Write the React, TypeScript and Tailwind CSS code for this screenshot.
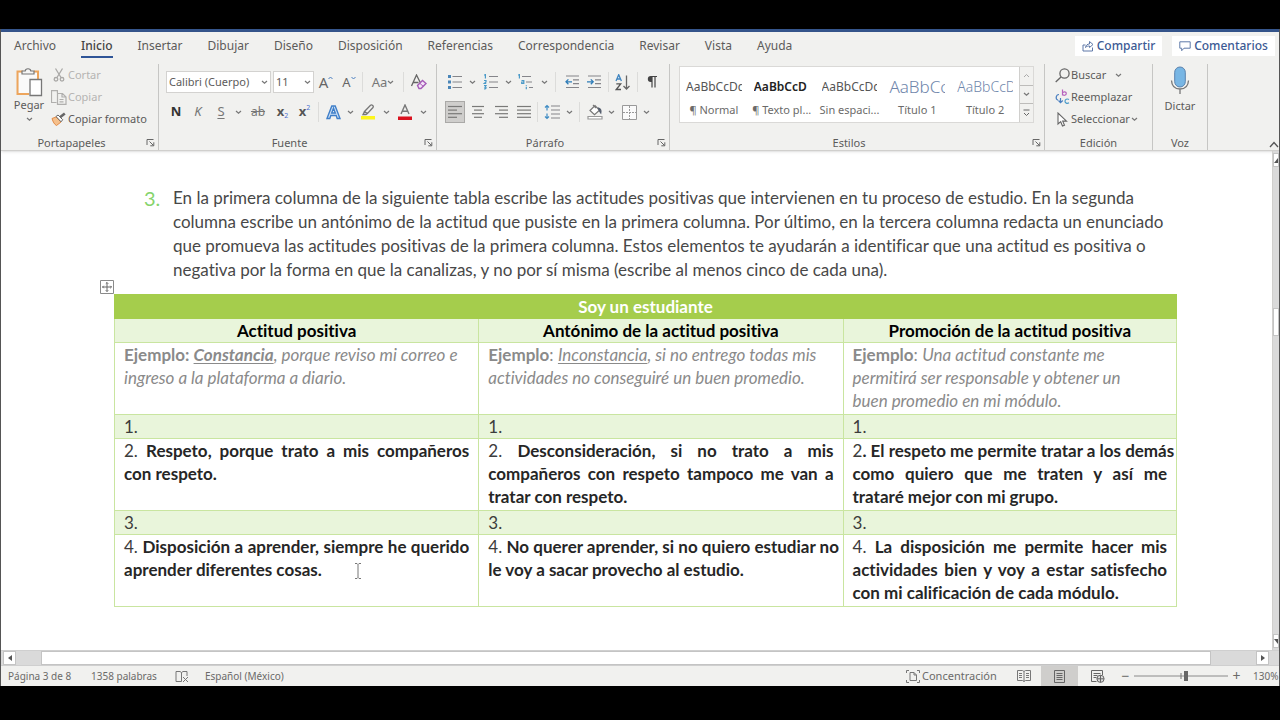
import type { ReactNode } from "react";

const TABS = [
  "Archivo",
  "Inicio",
  "Insertar",
  "Dibujar",
  "Diseño",
  "Disposición",
  "Referencias",
  "Correspondencia",
  "Revisar",
  "Vista",
  "Ayuda",
];

function Chevron() {
  return (
    <svg width="7" height="5" viewBox="0 0 7 5" fill="none" stroke="#777" strokeWidth="1.2">
      <path d="M1 1l2.5 2.3L6 1" />
    </svg>
  );
}

function Tool({ label, w, children }: { label: string; w: string; children: ReactNode }) {
  return (
    <button type="button" aria-label={label} className={`flex h-[22px] shrink-0 items-center justify-center ${w}`}>
      {children}
    </button>
  );
}

function More({ label, w = "w-[10px]" }: { label: string; w?: string }) {
  return (
    <Tool label={label} w={w}>
      <Chevron />
    </Tool>
  );
}

function Sep({ w = "w-[5px]" }: { w?: string }) {
  return (
    <span className={`flex h-5 shrink-0 justify-center ${w}`}>
      <span className="w-px bg-[#dcdcda]" />
    </span>
  );
}

function Group({
  title,
  w,
  launcher = false,
  children,
}: {
  title: string;
  w: string;
  launcher?: boolean;
  children: ReactNode;
}) {
  return (
    <section
      aria-label={title}
      className={`mt-1 flex shrink-0 flex-col border-r border-[#c6c6c4] ${w}`}
    >
      <div className="flex-1">{children}</div>
      <div className="flex h-[15px] items-center">
        <span className={`flex-1 text-center text-[11px] leading-[15px] text-[#5c5b5a] ${launcher ? "pr-1" : ""}`}>{title}</span>
        {launcher && (
          <button type="button" aria-label={`Opciones de ${title}`} className="block w-3">
            <svg width="9" height="9" viewBox="0 0 9 9" fill="none" stroke="#666" strokeWidth="1">
              <path d="M1 7V1.5h6.5M3.5 3.5l4 4M7.8 4.3v3.5H4.3" />
            </svg>
          </button>
        )}
      </div>
    </section>
  );
}

function Lines({ rows }: { rows: [number, number][] }) {
  return (
    <svg width="14" height="14" viewBox="0 0 14 14" stroke="#7a7a78" strokeWidth="1.2">
      {rows.map(([a, b], i) => (
        <path key={i} d={`M${a} ${1.5 + i * 3.6}H${b}`} />
      ))}
    </svg>
  );
}

function BulletIcon() {
  return (
    <svg width="16" height="16" viewBox="0 0 16 16" fill="none">
      <path d="M5.5 2.5H15M5.5 8H15M5.5 13.5H15" stroke="#85858a" strokeWidth="1.2" />
      <path d="M1 1h3v3H1zM1 6.500h3v3H1zM1 12h3v3H1z" fill="#4a86b8" />
    </svg>
  );
}

function NumberIcon() {
  return (
    <svg width="16" height="16" viewBox="0 0 16 16" fill="none">
      <path d="M6 2.5h9M6 8h9M6 13.5h9" stroke="#85858a" strokeWidth="1.2" />
      <path d="M1.2 1.2l1.2-.7v4M1 6.5h2v1.4L1.2 9.5h2M1 11.5h2l-1 1.6c1.8 0 1.3 2-.9 1.7" stroke="#4a9ac8" strokeWidth="1.2" />
    </svg>
  );
}

function MultiIcon() {
  return (
    <svg width="18" height="16" viewBox="0 0 18 16" fill="none">
      <path d="M5 2.5h9M9 8h6M12 13.5h4" stroke="#85858a" strokeWidth="1.2" />
      <path d="M1.2 1.2l1.2-.7v4M4.5 6.5h2.3v3H4.7V8h2M9.3 11.2v.8M9.3 12.8v2.4" stroke="#4a9ac8" strokeWidth="1.2" />
    </svg>
  );
}

function IndentIcon({ out = false }: { out?: boolean }) {
  return (
    <svg width="15" height="14" viewBox="0 0 15 14" fill="none">
      <path d="M1 1h13M8 4.8h6M8 8.7h6M1 12.5h13" stroke="#85858a" strokeWidth="1.2" />
      <path
        d={out ? "M7 6.8H1M3.4 4.4L1 6.8l2.4 2.4" : "M0 6.8h6M3.8 4.4l2.4 2.4-2.4 2.4"}
        stroke="#2f7db8"
        strokeWidth="1.3"
      />
    </svg>
  );
}

function SmallTool({ label, muted = false, icon, children }: { label: string; muted?: boolean; icon: ReactNode; children?: ReactNode }) {
  return (
    <button
      type="button"
      className={`flex h-[22px] items-center gap-px text-[11px] ${muted ? "text-[#b5b4b2]" : "text-[#5c5b5a]"}`}
    >
      <span className="flex w-4 justify-center">{icon}</span>
      {label}
      {children}
    </button>
  );
}

function Picker({ label, value, w }: { label: string; value: string; w: string }) {
  return (
    <span className={`grid h-[22px] items-center border border-[#d3d2d0] bg-white ${w}`}>
      <select
        aria-label={label}
        defaultValue={value}
        className="col-start-1 row-start-1 w-full appearance-none bg-transparent pl-0.5 text-[11px] text-[#5c5b5a]"
      >
        <option>{value}</option>
      </select>
      <span className="pointer-events-none col-start-1 row-start-1 justify-self-end pr-0.5">
        <Chevron />
      </span>
    </span>
  );
}

function StyleCard({ sample, name, tone }: { sample: string; name: string; tone: string }) {
  return (
    <button type="button" className="flex min-w-0 flex-1 flex-col items-center px-1.5 pt-2">
      <span className={`h-6 w-full overflow-hidden text-left leading-6 whitespace-nowrap ${tone}`}>{sample}</span>
      <span className="text-[11px] leading-[22px] whitespace-nowrap text-[#6b6a69]">{name}</span>
    </button>
  );
}

function Clipboard() {
  return (
    <Group title="Portapapeles" w="w-[158px]" launcher>
      <div className="flex pl-3">
        <button type="button" className="flex w-8 flex-col items-center pt-1 text-[11px] text-[#5c5b5a]">
          <svg width="28" height="29" viewBox="0 0 28 29" fill="none">
            <path d="M8 3.500H2.500V26H14M19 3.500h4V11" stroke="#eda55c" strokeWidth="2" />
            <path d="M4 5h18v6h-7v14H4z" fill="#fafafa" />
            <path d="M7 6V3h3.200c.3-3 5.300-3 5.600 0H19v3z" fill="#f6f6f6" stroke="#777" strokeWidth="1.200" />
            <path d="M15 11.500h11.500V27.500H15z" fill="#fff" stroke="#777" strokeWidth="1.300" />
          </svg>
          <span className="leading-4">Pegar</span>
          <span className="pt-1">
            <Chevron />
          </span>
        </button>
        <div className="pl-1.5">
          <SmallTool
            label="Cortar"
            muted
            icon={
              <svg width="12" height="14" viewBox="0 0 12 14" fill="none" stroke="#aaa9a7" strokeWidth="1.300">
                <path d="M2.500 0.500l5.500 9M9.500 0.500L4 9.500" />
                <circle cx="3" cy="11.300" r="1.800" />
                <circle cx="9" cy="11.300" r="1.800" />
              </svg>
            }
          />
          <SmallTool
            label="Copiar"
            muted
            icon={
              <svg width="16" height="15" viewBox="0 0 16 15" fill="none" stroke="#b0afad" strokeWidth="1.200">
                <path d="M5.500 12.500h-5V.6h5.900V3M6.500 3.500h5l3.500 3.500v7.300H6.500zM11 3.500V7h4M8.500 9.500h4M8.500 11.800h4" />
              </svg>
            }
          />
          <SmallTool
            label="Copiar formato"
            icon={
              <svg width="16" height="14" viewBox="0 0 16 14" fill="none">
                <path d="M1 6.500l4-1.500 5 5-4.500 3.500c-2-1-3.500-3.500-4.500-7z" fill="#f5c08c" stroke="#e28a45" />
                <path d="M5 4.500l2-1.500 4.700 4.700-1.600 2.100z" fill="#fff" stroke="#666" />
                <path d="M9 5.300L13.800 1.500" stroke="#666" strokeWidth="2.600" />
              </svg>
            }
          />
        </div>
      </div>
    </Group>
  );
}

function FontGroup() {
  return (
    <Group title="Fuente" w="w-[278px]" launcher>
      <div className="flex flex-col gap-2 pt-[7px] pl-[7px]">
        <div className="flex items-center">
          <Picker label="Fuente" value="Calibri (Cuerpo)" w="w-[105px]" />
          <span className="w-0.5" />
          <Picker label="Tamaño de fuente" value="11" w="w-[41px]" />
          <Tool label="Aumentar tamaño" w="w-6">
            <span className="text-[15px] leading-5 text-[#666]">A</span>
            <svg width="5" height="12" viewBox="0 0 5 12" fill="none" stroke="#4a7fc0"><path d="M.5 3L2.500 1l2 2" /></svg>
          </Tool>
          <Tool label="Disminuir tamaño" w="w-[22px]">
            <span className="text-[13px] leading-5 text-[#666]">A</span>
            <svg width="5" height="12" viewBox="0 0 5 12" fill="none" stroke="#4a7fc0"><path d="M.5 1l2 2 2-2" /></svg>
          </Tool>
          <Sep />
          <Tool label="Cambiar mayúsculas" w="w-9">
            <span className="text-[13px] leading-5 text-[#777]">Aa</span>
            <Chevron />
          </Tool>
          <Sep />
          <Tool label="Borrar formato" w="w-[26px]">
            <svg width="18" height="16" viewBox="0 0 18 16" fill="none">
              <path d="M1.500 12L6.500 1l4 8M3.500 8.500h5" stroke="#666" strokeWidth="1.300" />
              <path d="M7.500 11.500l5-5 3.500 3-5 5h-2z" fill="#f4e4f7" stroke="#a55bb8" strokeWidth="1.400" />
              <path d="M9.800 9.300l3.400 3" stroke="#a55bb8" />
            </svg>
          </Tool>
        </div>
        <div className="flex items-center">
          <Tool label="Negrita" w="w-5"><b className="text-[13px] text-[#333]">N</b></Tool>
          <Tool label="Cursiva" w="w-6"><i className="text-[13px] text-[#777]">K</i></Tool>
          <Tool label="Subrayado" w="w-[22px]"><u className="text-[13px] text-[#777] underline-offset-2">S</u></Tool>
          <More label="Tipos de subrayado" w="w-3" />
          <Tool label="Tachado" w="w-7"><s className="text-[12px] text-[#777]">ab</s></Tool>
          <Tool label="Subíndice" w="w-[21px]">
            <b className="text-[13px] text-[#555]">x</b><span className="pt-2 text-[7px] text-[#4a6fd0]">2</span>
          </Tool>
          <Tool label="Superíndice" w="w-[23px]">
            <b className="text-[13px] text-[#555]">x</b><span className="pb-2 text-[7px] text-[#4a6fd0]">2</span>
          </Tool>
          <Sep />
          <Tool label="Efectos de texto" w="w-6">
            <svg width="15" height="15" viewBox="0 0 15 15" fill="#cfe2f6" stroke="#3f7fc9" strokeWidth="1.400">
              <path d="M1 13.500L5.800 1h3.400L14 13.500h-2.800l-1-3H4.800l-1 3zM5.700 8h3.600L7.500 3.300z" />
            </svg>
          </Tool>
          <More label="Más efectos" />
          <Tool label="Color de resaltado" w="w-[26px]">
            <svg width="16" height="16" viewBox="0 0 16 16" fill="none">
              <path d="M4.500 7.500l6-6.300c1.500-1 3.500.8 2.500 2.300L7.500 9.500zM4.500 7.500l-1.500 3h3l1.500-1" stroke="#777" strokeWidth="1.300" />
              <path d="M1 12h14v3.500H1z" fill="#fdf51c" />
            </svg>
          </Tool>
          <More label="Más resaltados" />
          <Tool label="Color de fuente" w="w-[27px]">
            <svg width="16" height="17" viewBox="0 0 16 17" fill="none">
              <path d="M4 10L8 1l4 9M5.300 7.200h5.400" stroke="#777" strokeWidth="1.400" />
              <path d="M1 12.500h14V16H1z" fill="#d9121f" />
            </svg>
          </Tool>
          <More label="Más colores" />
        </div>
      </div>
    </Group>
  );
}

function Paragraph() {
  return (
    <Group title="Párrafo" w="w-[233px]" launcher>
      <div className="flex flex-col gap-2 pt-[7px] pl-2">
        <div className="flex items-center">
          <Tool label="Viñetas" w="w-5"><BulletIcon /></Tool>
          <More label="Más viñetas" w="w-[14px]" />
          <Tool label="Numeración" w="w-6"><NumberIcon /></Tool>
          <More label="Más numeración" />
          <Tool label="Lista multinivel" w="w-[26px]"><MultiIcon /></Tool>
          <More label="Más listas" />
          <Sep w="w-[13px]" />
          <Tool label="Disminuir sangría" w="w-5"><IndentIcon out /></Tool>
          <Tool label="Aumentar sangría" w="w-6"><IndentIcon /></Tool>
          <Sep />
          <Tool label="Ordenar" w="w-6">
            <svg width="16" height="17" viewBox="0 0 16 17" fill="none" strokeWidth="1.300">
              <path d="M1 7l2.700-6.300L6.400 7M2 5h3.500" stroke="#3f85c0" />
              <path d="M1.300 9.800h4.400L1.300 15.500h4.700" stroke="#555" />
              <path d="M11.500 1.500v13.500M8.500 12l3 3 3-3" stroke="#666" />
            </svg>
          </Tool>
          <Sep />
          <Tool label="Mostrar todo" w="w-6">
            <svg width="10" height="14" viewBox="0 0 10 14" fill="none">
              <path d="M5 1H3.800a3 3 0 000 6H5z" fill="#444" />
              <path d="M3.800 1.500H10M5 1v11.500M8 1v11.500" stroke="#444" strokeWidth="1.200" />
            </svg>
          </Tool>
        </div>
        <div className="flex items-center">
          <Tool label="Alinear a la izquierda" w="w-5 border border-[#aaa9a7] bg-[#cfcecc]">
            <Lines rows={[[0, 14], [0, 9], [0, 14], [0, 9]]} />
          </Tool>
          <Tool label="Centrar" w="w-[25px]"><Lines rows={[[1, 13], [3, 11], [1, 13], [3, 11]]} /></Tool>
          <Tool label="Alinear a la derecha" w="w-[22px]"><Lines rows={[[1, 14], [5, 14], [1, 14], [5, 14]]} /></Tool>
          <Tool label="Justificar" w="w-[23px]"><Lines rows={[[0, 14], [0, 14], [0, 14], [0, 14]]} /></Tool>
          <Sep />
          <Tool label="Espaciado" w="w-6">
            <svg width="16" height="16" viewBox="0 0 16 16" fill="none">
              <path d="M7 2h9M7 6h9M7 10h9M7 14h9" stroke="#85858a" strokeWidth="1.200" />
              <path d="M3 1.500v5M1 3.500l2-2 2 2M3 9.500v5M1 12.500l2 2 2-2" stroke="#3f8cc4" strokeWidth="1.200" />
            </svg>
          </Tool>
          <More label="Más espaciado" />
          <Sep w="w-[11px]" />
          <Tool label="Sombreado" w="w-5">
            <svg width="16" height="16" viewBox="0 0 16 16" fill="none" stroke="#777" strokeWidth="1.200">
              <path d="M3 6.500L8 1.500l4.500 4.800-5 4.500zM6 1l3 3" fill="#fff" />
              <path d="M11.500 4c2 .5 2.800 2.500 2.300 5-1-1-1.500-2-2.300-5z" fill="#555e6e" stroke="#555e6e" />
              <path d="M1 12.500h14v2.500H1z" fill="#fff" stroke="#999" />
            </svg>
          </Tool>
          <More label="Más sombreado" w="w-3" />
          <Tool label="Bordes" w="w-6">
            <svg width="15" height="15" viewBox="0 0 15 15" fill="none" stroke="#999">
              <path d="M.5 .5h14v14H.5z" fill="#fafafa" />
              <path d="M7.500 1v13M1 7.500h13" strokeDasharray="2 1" />
            </svg>
          </Tool>
          <More label="Más bordes" />
        </div>
      </div>
    </Group>
  );
}

function Styles() {
  return (
    <Group title="Estilos" w="w-[375px]" launcher>
      <div className="pt-0.5 pr-[10px] pl-[9px]">
        <div className="flex h-[57px] border border-[#dad9d7] bg-white">
          <StyleCard sample="AaBbCcDd" name="¶ Normal" tone="text-[12px] text-[#555]" />
          <StyleCard sample="AaBbCcD" name="¶ Texto pl..." tone="text-[12px] font-semibold text-[#222]" />
          <StyleCard sample="AaBbCcDd" name="Sin espaci..." tone="text-[12px] text-[#555]" />
          <StyleCard sample="AaBbCc" name="Título 1" tone="text-[17px] font-light text-[#6f86ab]" />
          <StyleCard sample="AaBbCcD" name="Título 2" tone="text-[14px] font-light text-[#6f86ab]" />
          <div className="flex w-[14px] flex-col divide-y divide-[#bdbcba] border-l border-[#d0cfcd] bg-[#f1f1ef]">
            <button type="button" aria-label="Subir" className="flex flex-1 items-center justify-center">
              <svg width="7" height="5" viewBox="0 0 7 5" fill="none" stroke="#aaa"><path d="M1 4l2.500-2.500L6 4" /></svg>
            </button>
            <button type="button" aria-label="Bajar" className="flex flex-1 items-center justify-center"><Chevron /></button>
            <button type="button" aria-label="Más estilos" className="flex flex-1 items-center justify-center">
              <svg width="7" height="8" viewBox="0 0 7 8" fill="none" stroke="#666"><path d="M.5 1h6M1 4l2.500 2.500L6 4" /></svg>
            </button>
          </div>
        </div>
      </div>
    </Group>
  );
}

function Editing() {
  return (
    <Group title="Edición" w="w-[108px]">
      <div className="flex flex-col pl-[9px]">
        <SmallTool
          label="Buscar"
          icon={
            <svg width="15" height="15" viewBox="0 0 15 15" fill="none" stroke="#666" strokeWidth="1.300">
              <circle cx="9.500" cy="5.500" r="4.600" /><path d="M6 9l-5.300 5" />
            </svg>
          }
        >
          <span className="pl-2"><Chevron /></span>
        </SmallTool>
        <SmallTool
          label="Reemplazar"
          icon={
            <svg width="15" height="16" viewBox="0 0 15 16" fill="none" strokeWidth="1.200">
              <path d="M7.500.5v6M7.500 4c1-2 4-1.300 3.800.6-.2 2-3 2.200-3.800.6" stroke="#b763bd" />
              <path d="M4 5.500c-3 0-4 4.500-1 5.800M5.500 9v5M3.500 11.500l2 2.200 2.300-2.200" stroke="#4a7fc0" />
              <path d="M14 10.500c-2-1.200-4 0-4 1.700s2 2.900 4 1.600" stroke="#4a9ac8" />
            </svg>
          }
        />
        <SmallTool
          label="Seleccionar"
          icon={
            <svg width="11" height="15" viewBox="0 0 11 15" fill="#fff" stroke="#666" strokeWidth="1.100">
              <path d="M1 1v11l2.700-2.300L5.500 14l2-.8-1.800-4.100H9.500z" />
            </svg>
          }
        >
          <Chevron />
        </SmallTool>
      </div>
    </Group>
  );
}

function Dictate() {
  return (
    <Group title="Voz" w="w-[55px]">
      <button type="button" className="flex w-full flex-col items-center pt-0.5 text-[11px] text-[#5c5b5a]">
        <svg width="20" height="30" viewBox="0 0 20 30" fill="none">
          <rect x="4.700" y="1" width="10.600" height="20" rx="5.300" fill="#78b6e4" stroke="#5a82ad" />
          <path d="M1.500 14.500c.3 6 4 8.500 8.500 8.500s8.200-2.500 8.500-8.500M10 23v5" stroke="#777" strokeWidth="1.300" />
        </svg>
        <span className="leading-5">Dictar</span>
      </button>
    </Group>
  );
}

function Cell({ lines, justify = false }: { lines: ReactNode[]; justify?: boolean }) {
  return (
    <td className="border border-[#c9e5a0] px-[9px] align-top whitespace-nowrap">
      {lines.map((line, i) => (
        <span
          key={i}
          className={justify && i < lines.length - 1 ? "block text-justify [text-align-last:justify]" : "block"}
        >
          {line}
        </span>
      ))}
    </td>
  );
}

function NumberRow({ n }: { n: string }) {
  return (
    <tr className="h-6 bg-[#e9f5db]">
      <Cell lines={[n]} />
      <Cell lines={[n]} />
      <Cell lines={[n]} />
    </tr>
  );
}

function B({ children }: { children: ReactNode }) {
  return <b className="text-[#262626]">{children}</b>;
}

function DocumentTable() {
  return (
    <table className="w-full table-fixed border-collapse text-[17px] leading-[23px] text-[#3c3c3c]">
      <colgroup>
        <col className="w-[34.300%]" />
        <col className="w-[34.300%]" />
        <col />
      </colgroup>
      <thead>
        <tr className="h-6 bg-[#a5cd4c] text-white">
          <th colSpan={3} className="border border-[#a5cd4c]">Soy un estudiante</th>
        </tr>
        <tr className="h-6 bg-[#e9f5db] text-black">
          <th className="border border-[#c9e5a0]">Actitud positiva</th>
          <th className="border border-[#c9e5a0]">Antónimo de la actitud positiva</th>
          <th className="border border-[#c9e5a0]">Promoción de la actitud positiva</th>
        </tr>
      </thead>
      <tbody>
        <tr className="h-[72px] text-[#8a8a8a]">
          <Cell
            lines={[
              <>
                <b>Ejemplo: <i className="underline underline-offset-2">Constancia</i></b>
                <i>, porque reviso mi correo e</i>
              </>,
              <i>ingreso a la plataforma a diario.</i>,
            ]}
          />
          <Cell
            lines={[
              <>
                <b>Ejemplo</b>: <i><span className="underline underline-offset-2">Inconstancia</span>, si no entrego todas mis</i>
              </>,
              <i>actividades no conseguiré un buen promedio.</i>,
            ]}
          />
          <Cell
            lines={[
              <>
                <b>Ejemplo</b>: <i>Una actitud constante me</i>
              </>,
              <i>permitirá ser responsable y obtener un</i>,
              <i>buen promedio en mi módulo.</i>,
            ]}
          />
        </tr>
        <NumberRow n="1." />
        <tr className="h-[72px]">
          <Cell justify lines={[<>2. <B>Respeto, porque trato a mis compañeros</B></>, <B>con respeto.</B>]} />
          <Cell
            justify
            lines={[
              <>2. <B>Desconsideración, si no trato a mis</B></>,
              <B>compañeros con respeto tampoco me van a</B>,
              <B>tratar con respeto.</B>,
            ]}
          />
          <Cell
            justify
            lines={[
              <>2<B>. El respeto me permite tratar a los demás</B></>,
              <B>como quiero que me traten y así me</B>,
              <B>trataré mejor con mi grupo.</B>,
            ]}
          />
        </tr>
        <NumberRow n="3." />
        <tr className="h-[72px]">
          <Cell
            justify
            lines={[<>4. <B>Disposición a aprender, siempre he querido</B></>, <B>aprender diferentes cosas.</B>]}
          />
          <Cell
            justify
            lines={[<>4. <B>No querer aprender, si no quiero estudiar no</B></>, <B>le voy a sacar provecho al estudio.</B>]}
          />
          <Cell
            justify
            lines={[
              <>4. <B>La disposición me permite hacer mis</B></>,
              <B>actividades bien y voy a estar satisfecho</B>,
              <B>con mi calificación de cada módulo.</B>,
            ]}
          />
        </tr>
      </tbody>
    </table>
  );
}

export default function App() {
  return (
    <div className="flex min-h-screen flex-col bg-black pt-[29px] font-['Noto_Sans',sans-serif]">
      <div className="flex flex-1 flex-col overflow-hidden border-x border-[#555] bg-white">
        <div className="h-[3px] bg-[#35558c]" />
        <header className="border-b border-[#d0cfcd] bg-[#f1f1ef] shadow-sm">
          <div className="flex h-7 items-center pl-[13px]">
            <nav className="flex gap-[25px] text-[12px] text-[#5c5b5a]">
              {TABS.map((tab) => (
                <a
                  key={tab}
                  href="#"
                  className={
                    tab === "Inicio"
                      ? "border-b-2 border-[#2f5597] pt-0.5 leading-5 font-medium text-[#444]"
                      : "border-b-2 border-transparent pt-0.5 leading-5"
                  }
                >
                  {tab}
                </a>
              ))}
            </nav>
            <div className="ml-auto flex gap-2.5 pr-1 text-[12px] font-medium text-[#3c5a94]">
              <button type="button" className="flex h-5 w-[87px] items-center justify-center gap-[3px] bg-white">
                <svg width="12" height="12" viewBox="0 0 12 12" fill="none" stroke="#5f79a8">
                  <path d="M3.500 5H1v6h9.500V7.500M3.500 7.500c.5-2.500 2-3.500 4-3.500V1.500l3.500 3-3.500 3V6c-1.500 0-3 .3-4 1.500z" />
                </svg>
                Compartir
              </button>
              <button type="button" className="flex h-5 w-[103px] items-center justify-center gap-[3px] bg-white">
                <svg width="12" height="11" viewBox="0 0 12 11" fill="none" stroke="#5f79a8">
                  <path d="M.8.8h10.400v6.400H5L2.700 9.700V7.200H.8z" />
                </svg>
                Comentarios
              </button>
            </div>
          </div>
          <div className="flex h-[90px]">
            <Clipboard />
            <FontGroup />
            <Paragraph />
            <Styles />
            <Editing />
            <Dictate />
            <button type="button" aria-label="Contraer la cinta" className="ml-auto self-end pb-0.5">
              <svg width="10" height="7" viewBox="0 0 10 7" fill="none" stroke="#555" strokeWidth="1.300"><path d="M1 6l4-4.500L9 6" /></svg>
            </button>
          </div>
        </header>

        <div className="flex flex-1">
          <main className="flex-1 pt-[35px] pr-[95px] pl-[113px] font-['Lato',sans-serif] [font-variant-ligatures:none]">
            <div className="flex text-[17px] leading-6 text-[#484848]">
              <span className="w-[59px] pl-[30px] text-[20px] text-[#86d46c]">3.</span>
              <p className="whitespace-nowrap">
                En la primera columna de la siguiente tabla escribe las actitudes positivas que intervienen en tu proceso de estudio. En la segunda
                <br />
                columna escribe un antónimo de la actitud que pusiste en la primera columna. Por último, en la tercera columna redacta un enunciado
                <br />
                que promueva las actitudes positivas de la primera columna. Estos elementos te ayudarán a identificar que una actitud es positiva o
                <br />
                negativa por la forma en que la canalizas, y no por sí misma (escribe al menos cinco de cada una).
              </p>
            </div>
            <div className="relative mt-3">
              <svg className="absolute -top-3.5 -left-3.5" width="14" height="14" viewBox="0 0 14 14" fill="#fff" stroke="#8a8a8a">
                <path d="M.5.5h13v13H.5z" />
                <path d="M7 2.500v9M2.500 7h9M5.800 3.700L7 2.500l1.200 1.200M5.800 10.300L7 11.500l1.200-1.200M3.700 5.800L2.500 7l1.200 1.200M10.300 5.800L11.500 7l-1.200 1.200" fill="none" stroke="#666" />
              </svg>
              <DocumentTable />
              <svg className="absolute bottom-7 left-60" width="8" height="16" viewBox="0 0 8 16" fill="none" stroke="#777">
                <path d="M1 .5h2l1 1 1-1h2M4 1.500v13M1 15.500h2l1-1 1 1h2" />
              </svg>
            </div>
          </main>
          <div className="flex w-[7px] flex-col overflow-hidden border-l border-[#d0cfcd] bg-[#dadada]">
            <span className="mt-0.5 flex h-[14px] items-center justify-end border border-[#c4c4c4] bg-white">
              <svg width="4" height="5" viewBox="0 0 4 5" fill="#555"><path d="M4 0v5H0z" /></svg>
            </span>
            <span className="mt-[141px] h-7 border border-[#c4c4c4] bg-white" />
            <span className="mt-auto mb-0.5 flex h-[14px] items-center justify-end border border-[#c4c4c4] bg-white">
              <svg width="4" height="5" viewBox="0 0 4 5" fill="#555"><path d="M4 5V0H0z" /></svg>
            </span>
          </div>
        </div>

        <div className="flex h-4 border-y border-[#cfcfcf] bg-[#dadada] pr-2.5 pl-0.5">
          <button type="button" aria-label="Desplazar a la izquierda" className="flex w-[13px] items-center justify-center border border-[#c4c4c4] bg-white">
            <svg width="4" height="6" viewBox="0 0 4 6" fill="#555"><path d="M4 0v6L0 3z" /></svg>
          </button>
          <span className="mr-[45px] ml-[25px] flex-1 border border-[#c4c4c4] bg-white" />
          <button type="button" aria-label="Desplazar a la derecha" className="flex w-[13px] items-center justify-center border border-[#c4c4c4] bg-white">
            <svg width="4" height="6" viewBox="0 0 4 6" fill="#555"><path d="M0 0v6l4-3z" /></svg>
          </button>
        </div>

        <footer className="flex h-5 items-center bg-[#f1f1ef] pl-[7px] text-[10px] whitespace-nowrap text-[#6b6a69]">
          <span className="w-[83px]">Página 3 de 8</span>
          <span className="w-[84px]">1358 palabras</span>
          <span className="w-[30px]">
            <svg width="14" height="13" viewBox="0 0 14 13" fill="none" stroke="#777">
              <path d="M6.500 11.500H1v-10h4l1.500 1v9M6.500 2.500l1.500-1h4V6M8 7l5 5M13 7l-5 5" />
            </svg>
          </span>
          <span>Español (México)</span>
          <button type="button" className="ml-auto flex w-[100px] items-center gap-0.5 text-[11px]">
            <svg width="14" height="13" viewBox="0 0 14 13" fill="none" stroke="#777">
              <path d="M.5 3V.5H3M11 .5h2.500V3M.5 10v2.500H3M11 12.500h2.500V10M4 2.500h4l2.500 2.500v5.500H4zM8 2.500V5h2.500" />
            </svg>
            Concentración
          </button>
          <button type="button" aria-label="Modo de lectura" className="flex h-5 w-[35px] items-center justify-center">
            <svg width="14" height="12" viewBox="0 0 14 12" fill="none" stroke="#777">
              <path d="M7 1.500L5.500.5h-5v10h5L7 11.500l1.500-1h5V.5h-5zM7 1.500v10M2 3.500h3M2 5.500h3M2 7.500h3M9 3.500h3M9 5.500h3M9 7.500h3" />
            </svg>
          </button>
          <button type="button" aria-label="Diseño de impresión" className="flex h-5 w-[37px] items-center justify-center bg-[#cfcecc]">
            <svg width="11" height="13" viewBox="0 0 11 13" fill="none" stroke="#666">
              <path d="M.5.5h10v12H.5zM2.500 3.500h6M2.500 5.500h6M2.500 7.500h6M2.500 9.500h6" />
            </svg>
          </button>
          <button type="button" aria-label="Diseño web" className="flex h-5 w-[39px] items-center justify-center">
            <svg width="14" height="13" viewBox="0 0 14 13" fill="none" stroke="#666">
              <path d="M5.500 11.500h-5V.5h11V5M2.500 3.500h7M2.500 5.500h4M2.500 7.500h3" />
              <circle cx="9.500" cy="8.800" r="3.600" fill="#ddd" /><path d="M6 8.800h7M9.500 5.200v7.200" />
            </svg>
          </button>
          <button type="button" aria-label="Alejar" className="w-[17px] text-center text-[14px] leading-5">−</button>
          <label className="grid w-[94px] items-center">
            <input type="range" aria-label="Zoom" min={10} max={240} defaultValue={135} className="peer col-start-1 row-start-1 h-4 w-full opacity-0" />
            <svg className="pointer-events-none col-start-1 row-start-1 h-3 w-full" viewBox="0 0 94 12" preserveAspectRatio="none">
              <path d="M0 6h94" stroke="#8a8a8a" />
              <path d="M47 3v6" stroke="#777" />
              <path d="M50 1h4v10h-4z" fill="#666" />
            </svg>
          </label>
          <button type="button" aria-label="Acercar" className="w-[17px] text-center text-[14px] leading-5">+</button>
          <span className="w-[34px] pl-2">130%</span>
        </footer>
      </div>
      <div className="h-[34px] shrink-0" />
    </div>
  );
}
